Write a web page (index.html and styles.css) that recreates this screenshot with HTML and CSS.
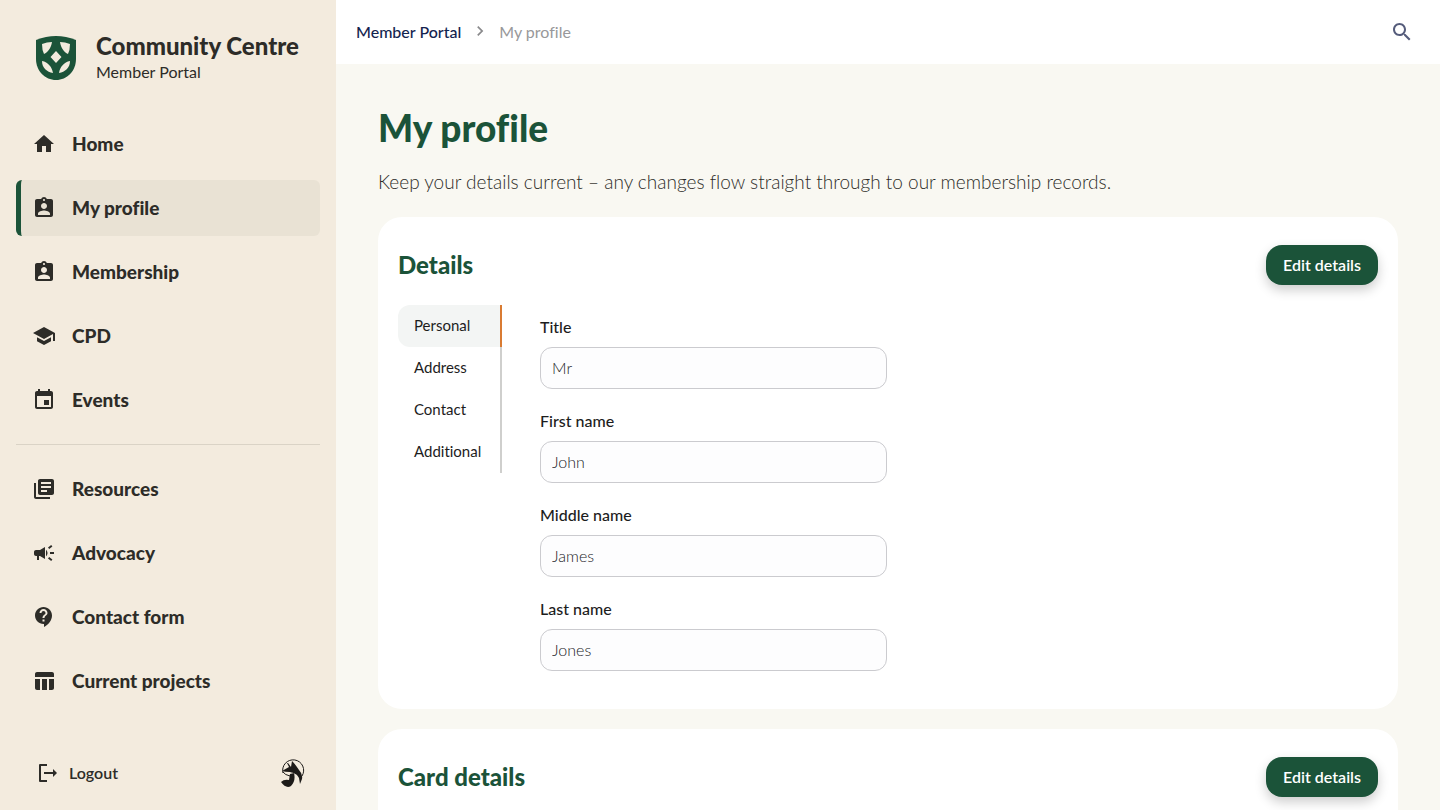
FILE: index.html
```html
<!DOCTYPE html>
<html lang="en">
<head>
  <meta charset="utf-8">
  <meta name="viewport" content="width=device-width, initial-scale=1">
  <title>My profile</title>
  <link rel="stylesheet" href="styles.css">
</head>
<body>
  <aside class="sidebar">
    <div class="brand">
      <svg class="brand-logo" viewBox="0 0 40 44">
        <path fill="#1b5339" d="M0 4Q20-4 40 4V23C40 35 31 44 20 44S0 35 0 23Z"/>
        <path fill="#f3ebde" d="M20 15l5.500 6-5.500 6-5.500-6zM6 8Q11 6 16 6C15 12 12 16 8 18Q6 14 6 8zM34 8Q29 6 24 6C25 12 28 16 32 18Q34 14 34 8zM6 25C12 26 16 31 17 37C11 36 6 32 6 25zM34 25C28 26 24 31 23 37C29 36 34 32 34 25z"/>
      </svg>
      <div>
        <div class="brand-name">Community Centre</div>
        <div class="brand-sub">Member Portal</div>
      </div>
    </div>

    <nav class="menu">
      <a class="menu-item" href="#">
        <svg class="icon" viewBox="0 0 24 24"><path d="M10 20v-6h4v6h5v-8h3L12 3 2 12h3v8z"/></svg>
        <span>Home</span>
      </a>
      <a class="menu-item active" href="#">
        <svg class="icon" viewBox="0 0 24 24"><path d="M19 3h-4.180C14.400 1.840 13.300 1 12 1s-2.400.84-2.820 2H5c-1.100 0-2 .9-2 2v14c0 1.100.9 2 2 2h14c1.100 0 2-.9 2-2V5c0-1.100-.9-2-2-2zm-7 0c.55 0 1 .45 1 1s-.45 1-1 1-1-.45-1-1 .45-1 1-1zm0 4c1.660 0 3 1.340 3 3s-1.340 3-3 3-3-1.340-3-3 1.340-3 3-3zm6 12H6v-1.400c0-2 4-3.100 6-3.100s6 1.100 6 3.100V19z"/></svg>
        <span>My profile</span>
      </a>
      <a class="menu-item" href="#">
        <svg class="icon" viewBox="0 0 24 24"><path d="M19 3h-4.180C14.400 1.840 13.300 1 12 1s-2.400.84-2.820 2H5c-1.100 0-2 .9-2 2v14c0 1.100.9 2 2 2h14c1.100 0 2-.9 2-2V5c0-1.100-.9-2-2-2zm-7 0c.55 0 1 .45 1 1s-.45 1-1 1-1-.45-1-1 .45-1 1-1zm0 4c1.660 0 3 1.340 3 3s-1.340 3-3 3-3-1.340-3-3 1.340-3 3-3zm6 12H6v-1.400c0-2 4-3.100 6-3.100s6 1.100 6 3.100V19z"/></svg>
        <span>Membership</span>
      </a>
      <a class="menu-item" href="#">
        <svg class="icon" viewBox="0 0 24 24"><path d="M5 13.180v4L12 21l7-3.820v-4L12 17l-7-3.820zM12 3L1 9l11 6 9-4.910V17h2V9L12 3z"/></svg>
        <span>CPD</span>
      </a>
      <a class="menu-item" href="#">
        <svg class="icon" viewBox="0 0 24 24"><path d="M17 12h-5v5h5v-5zM16 1v2H8V1H6v2H5c-1.110 0-1.990.9-1.990 2L3 19c0 1.100.89 2 2 2h14c1.100 0 2-.9 2-2V5c0-1.100-.9-2-2-2h-1V1h-2zm3 18H5V8h14v11z"/></svg>
        <span>Events</span>
      </a>
      <hr class="menu-divider">
      <a class="menu-item" href="#">
        <svg class="icon" viewBox="0 0 24 24"><path d="M4 6H2v14c0 1.100.9 2 2 2h14v-2H4V6zm16-4H8c-1.100 0-2 .9-2 2v12c0 1.100.9 2 2 2h12c1.100 0 2-.9 2-2V4c0-1.100-.9-2-2-2zm-1 9H9V9h10v2zm-4 4H9v-2h6v2zm4-8H9V5h10v2z"/></svg>
        <span>Resources</span>
      </a>
      <a class="menu-item" href="#">
        <svg class="icon" viewBox="0 0 24 24"><path d="M18 11v2h4v-2h-4zM16 17.610c.96.71 2.210 1.650 3.200 2.390.4-.53.8-1.070 1.200-1.600-.99-.74-2.240-1.680-3.200-2.400-.4.54-.8 1.080-1.200 1.610zM20.400 5.600c-.4-.53-.8-1.070-1.200-1.600-.99.74-2.240 1.680-3.200 2.400.4.53.8 1.070 1.200 1.600.96-.72 2.210-1.650 3.200-2.400zM4 9c-1.100 0-2 .9-2 2v2c0 1.100.9 2 2 2h1v4h2v-4h1l5 3V6L8 9H4zM15.500 12c0-1.330-.58-2.530-1.500-3.350v6.690c.92-.81 1.500-2.010 1.500-3.340z"/></svg>
        <span>Advocacy</span>
      </a>
      <a class="menu-item" href="#">
        <svg class="icon" viewBox="0 0 24 24"><path d="M11.500 2C6.810 2 3 5.810 3 10.500S6.810 19 11.500 19h.5v3c4.860-2.340 8-7 8-11.500C20 5.810 16.190 2 11.500 2zm1 14.500h-2v-2h2v2zm0-3.500h-2c0-3.250 3-3 3-5 0-1.100-.9-2-2-2s-2 .9-2 2h-2c0-2.210 1.790-4 4-4s4 1.790 4 4c0 2.500-3 2.750-3 5z"/></svg>
        <span>Contact form</span>
      </a>
      <a class="menu-item" href="#">
        <svg class="icon" viewBox="0 0 24 24"><path d="M10 10.020h5V21h-5zM17 21h3c1.100 0 2-.9 2-2v-9h-5v11zm3-18H5c-1.100 0-2 .9-2 2v3h19V5c0-1.100-.9-2-2-2zM3 19c0 1.100.9 2 2 2h3V10H3v9z"/></svg>
        <span>Current projects</span>
      </a>
    </nav>

    <div class="sidebar-footer">
      <a class="logout" href="#">
        <svg class="logout-icon" viewBox="0 0 20 20"><path d="M9 2H2V18H9M6 10H16" fill="none" stroke="currentColor" stroke-width="2" stroke-linejoin="round"/><path d="M15 6l4 4-4 4z"/></svg>
        <span>Logout</span>
      </a>
      <svg class="fox" viewBox="0 0 24 30">
        <path d="M2 15A10.500 10.500 0 1 1 21 18" fill="none" stroke="#1d1b19"/>
        <path fill="#1d1b19" d="M1 13L8 9 6 5 7 5 10 9 11 3C14 6 16 9 18 12Q22 16 21 21L19 26 18 20C16 16 13 15 9 14Q4 14 1 13zM9 16L13 15Q15 23 10 28Q5 31 0 24Q3 21 8 22z"/>
        <path d="M2 14Q4 17 9 18" fill="none" stroke="#1d1b19"/>
      </svg>
    </div>
  </aside>

  <div class="page">
    <header class="topbar">
      <nav class="breadcrumb">
        <a href="#">Member Portal</a>
        <svg class="chevron" viewBox="0 0 24 24"><path d="M8.590 16.590L13.170 12 8.590 7.410 10 6l6 6-6 6-1.410-1.410z"/></svg>
        <span>My profile</span>
      </nav>
      <button class="search" type="button" aria-label="Search">
        <svg class="icon" viewBox="0 0 24 24"><path d="M15.500 14h-.79l-.28-.27C15.410 12.590 16 11.110 16 9.500 16 5.910 13.090 3 9.500 3S3 5.910 3 9.500 5.910 16 9.500 16c1.610 0 3.090-.59 4.230-1.570l.27.28v.79l5 4.990L20.490 19l-4.990-5zm-6 0C7.010 14 5 11.990 5 9.500S7.010 5 9.500 5 14 7.010 14 9.500 11.990 14 9.500 14z"/></svg>
      </button>
    </header>

    <main class="content">
      <h1>My profile</h1>
      <p class="intro">Keep your details current – any changes flow straight through to our membership records.</p>

      <section class="card">
        <div class="card-header">
          <h2>Details</h2>
          <button class="btn" type="button">Edit details</button>
        </div>
        <div class="card-body">
          <div class="tabs">
            <button class="tab active" type="button">Personal</button>
            <button class="tab" type="button">Address</button>
            <button class="tab" type="button">Contact</button>
            <button class="tab" type="button">Additional</button>
          </div>
          <form class="fields">
            <div class="field">
              <label for="title">Title</label>
              <input type="text" id="title" value="Mr" readonly>
            </div>
            <div class="field">
              <label for="firstName">First name</label>
              <input type="text" id="firstName" value="John" readonly>
            </div>
            <div class="field">
              <label for="middleName">Middle name</label>
              <input type="text" id="middleName" value="James" readonly>
            </div>
            <div class="field">
              <label for="lastName">Last name</label>
              <input type="text" id="lastName" value="Jones" readonly>
            </div>
          </form>
        </div>
      </section>

      <section class="card">
        <div class="card-header">
          <h2>Card details</h2>
          <button class="btn" type="button">Edit details</button>
        </div>
      </section>
    </main>
  </div>
</body>
</html>
```

FILE: styles.css
```css
* {
  box-sizing: border-box;
}

body {
  margin: 0;
  display: flex;
  height: 100vh;
  overflow: hidden;
  background-color: #f9f8f2;
  color: #2d2c28;
  font-family: Lato, "Liberation Sans", sans-serif;
  font-size: 16px;
  font-variant-ligatures: none;
}

a {
  color: inherit;
  text-decoration: none;
}

button {
  font-family: inherit;
  font-variant-ligatures: none;
  border: none;
  cursor: pointer;
}

.icon {
  width: 24px;
  height: 24px;
  fill: currentColor;
  flex: none;
}

/* sidebar */
.sidebar {
  width: 336px;
  flex: none;
  padding: 32px 16px 22px;
  display: flex;
  flex-direction: column;
  background-color: #f3ebde;
}

.brand {
  display: flex;
  align-items: center;
  gap: 20px;
  padding: 0 20px;
  margin-bottom: 32px;
}

.brand-logo {
  width: 40px;
  height: 44px;
}

.brand-name {
  font-size: 24px;
  font-weight: 900;
  line-height: 28px;
}

.brand-sub {
  font-size: 16px;
  line-height: 24px;
}

.menu {
  display: flex;
  flex-direction: column;
  gap: 8px;
}

.menu-item {
  display: flex;
  align-items: center;
  gap: 16px;
  height: 56px;
  padding: 0 16px;
  border-radius: 6px;
  font-size: 19px;
  font-weight: 900;
}

.menu-item span,
.logout span {
  padding-bottom: 2px;
}

.menu-item.active {
  background-color: #e9e2d4;
  border-left: 5px solid #1b5339;
  padding-left: 11px;
}

.menu-divider {
  width: 100%;
  margin: 8px 0;
  border: none;
  border-top: 1px solid #dad3c6;
}

.sidebar-footer {
  display: flex;
  align-items: center;
  justify-content: space-between;
  margin-top: auto;
  padding: 0 15px 0 22px;
}

.logout {
  display: flex;
  align-items: center;
  gap: 11px;
  font-weight: 600;
}

.logout-icon {
  width: 20px;
  height: 20px;
  fill: currentColor;
}

.fox {
  width: 24px;
  height: 30px;
}

/* top bar */
.page {
  flex: 1;
  overflow: hidden;
}

.topbar {
  display: flex;
  align-items: center;
  justify-content: space-between;
  height: 64px;
  padding: 0 26px 0 20px;
  background-color: #fff;
}

.breadcrumb {
  display: flex;
  align-items: center;
  gap: 9px;
  padding-bottom: 2px;
  color: #98989a;
}

.breadcrumb a {
  color: #14244f;
  font-weight: 500;
}

.chevron {
  width: 20px;
  height: 20px;
  fill: #8a8a8c;
}

.search {
  display: flex;
  padding: 0;
  background: none;
  color: #555c7b;
}

/* content */
.content {
  padding: 40px 42px;
}

h1 {
  margin: 0 0 20px;
  color: #1b5339;
  font-size: 37px;
  font-weight: 900;
  line-height: 48px;
}

.intro {
  margin: 0 0 25px;
  font-size: 19px;
  font-weight: 300;
  line-height: 20px;
}

.card {
  margin-bottom: 20px;
  padding: 28px 20px 38px;
  border-radius: 24px;
  background-color: #fff;
}

.card-header {
  display: flex;
  align-items: center;
  justify-content: space-between;
  margin-bottom: 20px;
}

h2 {
  margin: 0;
  padding-bottom: 2px;
  color: #1b5339;
  font-size: 24px;
  font-weight: 900;
}

.btn {
  height: 40px;
  padding: 0 17px 2px;
  border-radius: 16px;
  background-color: #1b5339;
  color: #fff;
  font-size: 16px;
  font-weight: 600;
  box-shadow: 0 5px 12px rgba(0, 0, 0, 0.2);
}

.card-body {
  display: flex;
  align-items: flex-start;
  gap: 38px;
}

.tabs {
  display: flex;
  flex-direction: column;
  width: 104px;
}

.tab {
  height: 42px;
  padding: 0 0 2px 16px;
  border-right: 2px solid #cfcfcd;
  background: none;
  color: #1d1d1d;
  font-size: 15px;
  text-align: left;
}

.tab.active {
  border-right-color: #d97b32;
  border-radius: 12px 0 0 12px;
  background-color: #f3f5f4;
}

.fields {
  display: flex;
  flex-direction: column;
  gap: 22px;
  width: 347px;
  padding-top: 12px;
}

.field {
  display: flex;
  flex-direction: column;
  gap: 10px;
}

.field label {
  color: #1d1d1d;
  font-size: 16px;
  font-weight: 500;
  line-height: 20px;
}

.field input {
  width: 100%;
  height: 42px;
  padding: 0 11px 2px;
  border: 1px solid #cbcbcf;
  border-radius: 12px;
  background-color: #fdfdfe;
  color: #222226;
  font-family: inherit;
  font-size: 16px;
  font-weight: 300;
}
```
